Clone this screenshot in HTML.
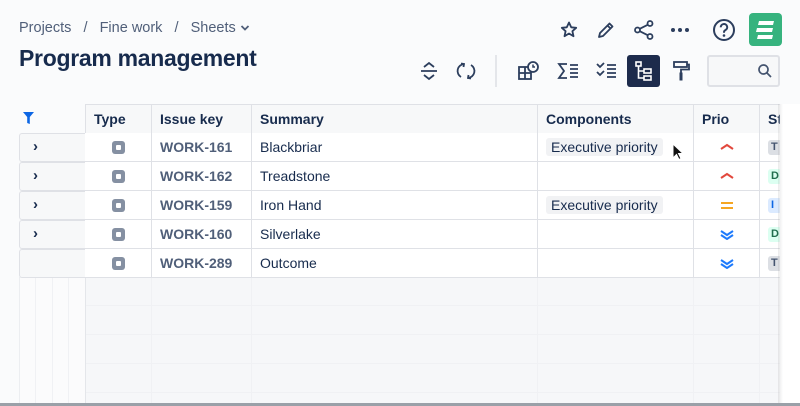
<!DOCTYPE html>
<html><head><meta charset="utf-8"><style>
*{box-sizing:border-box;margin:0;padding:0}
body{width:800px;height:406px;overflow:hidden;background:#fafbfc;font-family:"Liberation Sans",sans-serif;color:#172b4d;position:relative}
.abs{position:absolute}
.bc{left:19px;top:20px;font-size:14.5px;color:#505f79}
h1{position:absolute;left:19px;top:45px;font-size:23px;font-weight:bold;color:#172b4d;letter-spacing:-0.3px}
.ic{position:absolute}
.grid{position:absolute;left:85px;top:104px;width:695px;height:302px;overflow:hidden}
.row{position:absolute;left:0;height:29px;width:695px;background:#fff;border-bottom:1px solid #dfe1e6}
.cell{position:absolute;top:0;height:29px;line-height:28px;font-size:14px;border-right:1px solid #dfe1e6;padding-left:8px}
.hd .cell{font-weight:bold;background:#f7f8f9}
.key{color:#505f79;font-weight:bold}
.tag{background:#f1f2f4;padding:1px 5px;border-radius:3px}
.sq{position:absolute;left:27px;top:8px;width:13px;height:13px;border-radius:3px;background:#8590a2}
.sq:after{content:"";position:absolute;left:4px;top:4px;width:5px;height:5px;background:#fff;border-radius:1px}
.lrow{position:absolute;left:19px;width:66px;height:29px;background:#f7f8f9;border:1px solid #dfe1e6;border-right:none;border-radius:3px 0 0 3px}
.st{position:absolute;left:8px;top:7px;width:14px;height:15px;border-radius:3px}
</style></head><body>
<div class="abs bc">Projects&nbsp;&nbsp; / &nbsp;&nbsp;Fine work&nbsp;&nbsp; / &nbsp;&nbsp;Sheets <svg width="10" height="8" viewBox="0 0 10 8"><path d="M1.5 2l3.5 3.5 3.5-3.5" stroke="#505f79" stroke-width="1.8" fill="none"/></svg></div>
<h1>Program management</h1>

<svg class="ic" style="left:559px;top:20px" width="20" height="20" viewBox="0 0 20 20"><path d="M10 2.5l2.2 4.8 5 .5-3.8 3.4 1.1 5-4.5-2.7-4.5 2.7 1.1-5-3.8-3.4 5-.5z" fill="none" stroke="#2c3e5d" stroke-width="1.8" stroke-linejoin="round"/></svg>
<svg class="ic" style="left:596px;top:20px" width="20" height="20" viewBox="0 0 20 20"><path d="M3 17l1-4L13.5 3.5l3 3L7 16z M11.5 5.5l3 3" fill="none" stroke="#2c3e5d" stroke-width="1.8" stroke-linejoin="round"/></svg>
<svg class="ic" style="left:633px;top:19px" width="22" height="22" viewBox="0 0 22 22"><circle cx="17" cy="4.5" r="2.5" fill="none" stroke="#2c3e5d" stroke-width="1.8"/><circle cx="4.5" cy="11" r="2.5" fill="none" stroke="#2c3e5d" stroke-width="1.8"/><circle cx="17" cy="17.5" r="2.5" fill="none" stroke="#2c3e5d" stroke-width="1.8"/><path d="M6.7 9.8l8-4M6.7 12.2l8 4" stroke="#2c3e5d" stroke-width="1.8"/></svg>
<svg class="ic" style="left:670px;top:26px" width="20" height="8"><circle cx="3" cy="4" r="2" fill="#2c3e5d"/><circle cx="10" cy="4" r="2" fill="#2c3e5d"/><circle cx="17" cy="4" r="2" fill="#2c3e5d"/></svg>
<svg class="ic" style="left:712px;top:18px" width="24" height="24" viewBox="0 0 24 24"><circle cx="12" cy="12" r="10" fill="none" stroke="#2c3e5d" stroke-width="2"/><path d="M8.8 9.3a3.2 3.2 0 1 1 4.6 2.8c-1 .5-1.4 1.1-1.4 2.2v.5" fill="none" stroke="#2c3e5d" stroke-width="2"/><circle cx="12" cy="17.5" r="1.3" fill="#2c3e5d"/></svg>
<div class="abs" style="left:749px;top:13px;width:33px;height:33px;background:#36b37e;border-radius:4px"></div>
<svg class="ic" style="left:749px;top:13px" width="33" height="33" viewBox="0 0 33 33"><path d="M10 8h15l-1 4H9z M8 15h16l-1 4H7z M9 22h15l-1 4H8z" fill="#fff"/></svg>

<svg class="ic" style="left:418px;top:60px" width="22" height="22" viewBox="0 0 22 22"><path d="M6 7l5-4 5 4M6 15l5 4 5-4M3 11h16" fill="none" stroke="#2c3e5d" stroke-width="1.8"/></svg>
<svg class="ic" style="left:455px;top:60px" width="22" height="22" viewBox="0 0 22 22"><path d="M9 4A7 7 0 0 0 6 17M13 18A7 7 0 0 0 16 5M6 3.5l3 .5-.5 3M16 18.5l-3-.5.5-3" fill="none" stroke="#2c3e5d" stroke-width="1.8"/></svg>
<div class="abs" style="left:495px;top:55px;width:2px;height:32px;background:#e4e6ea"></div>
<svg class="ic" style="left:517px;top:60px" width="24" height="22" viewBox="0 0 24 22"><rect x="2" y="7" width="12" height="12" fill="none" stroke="#2c3e5d" stroke-width="1.8"/><path d="M2 13h12M8 7v12" stroke="#2c3e5d" stroke-width="1.8"/><circle cx="16" cy="7" r="5" fill="#fafbfc" stroke="#2c3e5d" stroke-width="1.8"/><path d="M16 4.5V7h2" stroke="#2c3e5d" stroke-width="1.5" fill="none"/></svg>
<svg class="ic" style="left:557px;top:61px" width="24" height="20" viewBox="0 0 24 20"><path d="M10 3H2l5 7-5 7h8" fill="none" stroke="#2c3e5d" stroke-width="1.8"/><path d="M13 4h8M13 8h8M13 12h8M13 16h8" stroke="#2c3e5d" stroke-width="1.8"/></svg>
<svg class="ic" style="left:595px;top:61px" width="24" height="20" viewBox="0 0 24 20"><path d="M2 3l3 3 4-4M2 11l3 3 4-4" fill="none" stroke="#2c3e5d" stroke-width="1.8"/><path d="M12 4h9M12 8h9M12 12h9M12 16h9" stroke="#2c3e5d" stroke-width="1.8"/></svg>
<div class="abs" style="left:627px;top:55px;width:33px;height:32px;background:#1d2b4c;border-radius:3px"></div>
<svg class="ic" style="left:634px;top:60px" width="20" height="22" viewBox="0 0 20 22"><rect x="2" y="2" width="5" height="4" fill="none" stroke="#fff" stroke-width="1.6"/><path d="M4.5 6v12h5M4.5 11h5" stroke="#fff" stroke-width="1.6" fill="none"/><rect x="10" y="9" width="7" height="4" fill="none" stroke="#fff" stroke-width="1.6"/><rect x="10" y="16" width="7" height="4" fill="none" stroke="#fff" stroke-width="1.6"/></svg>
<svg class="ic" style="left:671px;top:60px" width="20" height="22" viewBox="0 0 20 22"><rect x="3" y="2" width="13" height="5" fill="none" stroke="#2c3e5d" stroke-width="1.8"/><path d="M16 4.5h2v5H10v3" fill="none" stroke="#2c3e5d" stroke-width="1.8"/><rect x="8.5" y="12.5" width="3" height="8" fill="#2c3e5d"/></svg>
<div class="abs" style="left:707px;top:55px;width:73px;height:32px;border:2px solid #dfe1e6;border-radius:3px;background:#f7f8f9"></div>
<svg class="ic" style="left:757px;top:63px" width="16" height="16" viewBox="0 0 16 16"><circle cx="6.5" cy="6.5" r="4.5" fill="none" stroke="#44546f" stroke-width="1.7"/><path d="M10 10l4 4" stroke="#44546f" stroke-width="1.7"/></svg>

<svg class="ic" style="left:23px;top:112px" width="11" height="12" viewBox="0 0 11 12"><path d="M0 0h11L6.8 5v7L4.2 11V5z" fill="#0c66e4"/></svg>

<div class="abs" style="left:19px;top:277px;width:66px;height:129px;background:#fbfbfc;border-left:1px solid #eceef1"></div>
<div class="abs" style="left:35px;top:277px;width:1px;height:129px;background:#f0f1f4"></div>
<div class="abs" style="left:52px;top:277px;width:1px;height:129px;background:#f0f1f4"></div>
<div class="abs" style="left:68px;top:277px;width:1px;height:129px;background:#f0f1f4"></div>
<div class="lrow" style="top:133px"><span class="abs" style="left:13px;top:4px;font-size:15px;font-weight:bold">›</span></div>
<div class="lrow" style="top:162px"><span class="abs" style="left:13px;top:4px;font-size:15px;font-weight:bold">›</span></div>
<div class="lrow" style="top:191px"><span class="abs" style="left:13px;top:4px;font-size:15px;font-weight:bold">›</span></div>
<div class="lrow" style="top:220px"><span class="abs" style="left:13px;top:4px;font-size:15px;font-weight:bold">›</span></div>
<div class="lrow" style="top:249px"></div>

<div class="grid">
<div class="abs" style="left:0;top:0;width:695px;height:302px;background:#f7f8fa;border-left:1px solid #e4e6ea"></div>
<div class="abs" style="left:1px;top:173px;width:694px;height:129px;background:repeating-linear-gradient(#f6f7f9 0 28px,#f0f1f4 28px 29px)"></div>
<div class="abs" style="left:66px;top:173px;width:1px;height:130px;background:#f0f1f4"></div>
<div class="abs" style="left:166px;top:173px;width:1px;height:130px;background:#f0f1f4"></div>
<div class="abs" style="left:452px;top:173px;width:1px;height:130px;background:#f0f1f4"></div>
<div class="abs" style="left:608px;top:173px;width:1px;height:130px;background:#f0f1f4"></div>
<div class="abs" style="left:674px;top:173px;width:1px;height:130px;background:#f0f1f4"></div>

<div class="row hd" style="top:0;border-top:1px solid #dfe1e6;height:29px">
<div class="cell" style="left:0;width:67px;border-left:1px solid #dfe1e6">Type</div>
<div class="cell" style="left:67px;width:100px">Issue key</div>
<div class="cell" style="left:167px;width:286px">Summary</div>
<div class="cell" style="left:453px;width:156px">Components</div>
<div class="cell" style="left:609px;width:66px">Prio</div>
<div class="cell" style="left:675px;width:40px">Status</div>
</div>

<div class="row" style="top:29px"><div class="cell" style="left:0;width:67px"><i class="sq"></i></div><div class="cell key" style="left:67px;width:100px">WORK-161</div><div class="cell" style="left:167px;width:286px">Blackbriar</div><div class="cell" style="left:453px;width:156px"><span class="tag">Executive priority</span></div><div class="cell" style="left:609px;width:66px"><svg class="abs" style="left:26px;top:10px" width="14" height="8"><path d="M1 6l6-4 6 4" stroke="#e2483d" stroke-width="2" fill="none"/></svg></div><div class="cell" style="left:675px;width:40px"><i class="st" style="background:#dcdfe4"></i><b class="abs" style="left:11px;top:0;font-size:11px;color:#44546f">T</b></div></div>
<div class="row" style="top:58px"><div class="cell" style="left:0;width:67px"><i class="sq"></i></div><div class="cell key" style="left:67px;width:100px">WORK-162</div><div class="cell" style="left:167px;width:286px">Treadstone</div><div class="cell" style="left:453px;width:156px"></div><div class="cell" style="left:609px;width:66px"><svg class="abs" style="left:26px;top:10px" width="14" height="8"><path d="M1 6l6-4 6 4" stroke="#e2483d" stroke-width="2" fill="none"/></svg></div><div class="cell" style="left:675px;width:40px"><i class="st" style="background:#dcfff1"></i><b class="abs" style="left:11px;top:0;font-size:11px;color:#216e4e">D</b></div></div>
<div class="row" style="top:87px"><div class="cell" style="left:0;width:67px"><i class="sq"></i></div><div class="cell key" style="left:67px;width:100px">WORK-159</div><div class="cell" style="left:167px;width:286px">Iron Hand</div><div class="cell" style="left:453px;width:156px"><span class="tag">Executive priority</span></div><div class="cell" style="left:609px;width:66px"><svg class="abs" style="left:26px;top:10px" width="14" height="9"><path d="M1 2h12M1 7h12" stroke="#f5a623" stroke-width="2"/></svg></div><div class="cell" style="left:675px;width:40px"><i class="st" style="background:#dbeaff"></i><b class="abs" style="left:11px;top:0;font-size:11px;color:#0c66e4">I</b></div></div>
<div class="row" style="top:116px"><div class="cell" style="left:0;width:67px"><i class="sq"></i></div><div class="cell key" style="left:67px;width:100px">WORK-160</div><div class="cell" style="left:167px;width:286px">Silverlake</div><div class="cell" style="left:453px;width:156px"></div><div class="cell" style="left:609px;width:66px"><svg class="abs" style="left:26px;top:9px" width="14" height="11"><path d="M1 2l6 4 6-4M1 6l6 4 6-4" stroke="#1d7afc" stroke-width="2" fill="none"/></svg></div><div class="cell" style="left:675px;width:40px"><i class="st" style="background:#dcfff1"></i><b class="abs" style="left:11px;top:0;font-size:11px;color:#216e4e">D</b></div></div>
<div class="row" style="top:145px"><div class="cell" style="left:0;width:67px"><i class="sq"></i></div><div class="cell key" style="left:67px;width:100px">WORK-289</div><div class="cell" style="left:167px;width:286px">Outcome</div><div class="cell" style="left:453px;width:156px"></div><div class="cell" style="left:609px;width:66px"><svg class="abs" style="left:26px;top:9px" width="14" height="11"><path d="M1 2l6 4 6-4M1 6l6 4 6-4" stroke="#1d7afc" stroke-width="2" fill="none"/></svg></div><div class="cell" style="left:675px;width:40px"><i class="st" style="background:#dcdfe4"></i><b class="abs" style="left:11px;top:0;font-size:11px;color:#44546f">T</b></div></div>
</div>

<div class="abs" style="left:778px;top:104px;width:22px;height:302px;background:linear-gradient(90deg,rgba(0,0,0,0.08),#fff 5px,#fff)"></div>
<div class="abs" style="left:0;top:403px;width:800px;height:3px;background:#9aa0a8"></div>

<svg class="ic" style="left:672px;top:143px" width="12" height="18" viewBox="0 0 12 18"><path d="M1 1v14l3.5-3.5 2.5 5 2-1-2.5-5H11z" fill="#111" stroke="#fff" stroke-width="1"/></svg>
</body></html>
